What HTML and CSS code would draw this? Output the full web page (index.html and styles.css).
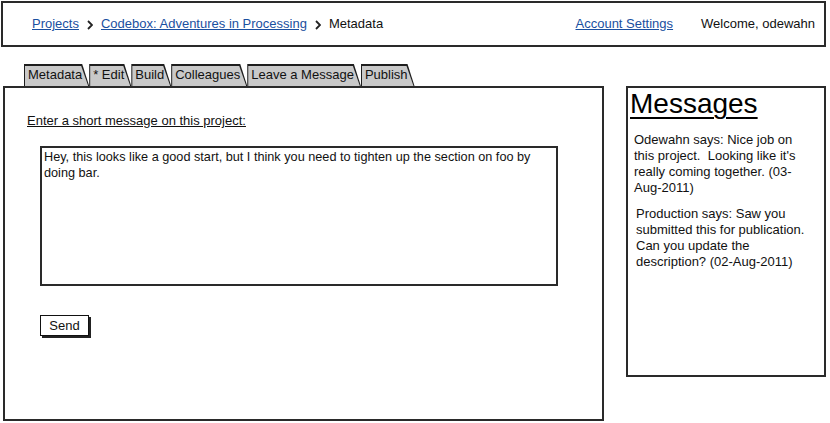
FILE: index.html
```html
<!DOCTYPE html>
<html>
<head>
<meta charset="utf-8">
<link rel="stylesheet" href="styles.css">
</head>
<body>
<div class="page">
  <header class="topbar">
    <nav class="crumbs">
      <a href="#" class="link">Projects</a>
      <svg class="chev" width="6" height="10" viewBox="0 0 6 10"><polyline points="1,1 5,5 1,9" fill="none" stroke="#222" stroke-width="1.8"/></svg>
      <a href="#" class="link">Codebox: Adventures in Processing</a>
      <svg class="chev" width="6" height="10" viewBox="0 0 6 10"><polyline points="1,1 5,5 1,9" fill="none" stroke="#222" stroke-width="1.8"/></svg>
      <span>Metadata</span>
    </nav>
    <div class="account">
      <a href="#" class="link">Account Settings</a>
      <span class="welcome">Welcome, odewahn</span>
    </div>
  </header>

  <div class="content">
    <nav class="tabs">
      <span class="tab"><span class="tab-in">Metadata</span></span>
      <span class="tab"><span class="tab-in">* Edit</span></span>
      <span class="tab"><span class="tab-in">Build</span></span>
      <span class="tab"><span class="tab-in">Colleagues</span></span>
      <span class="tab"><span class="tab-in">Leave a Message</span></span>
      <span class="tab"><span class="tab-in">Publish</span></span>
    </nav>

    <section class="panel">
      <div class="label">Enter a short message on this project:</div>
      <div class="textarea">Hey, this looks like a good start, but I think you need to tighten up the section on foo by doing bar.</div>
      <button class="send">Send</button>
    </section>

    <aside class="messages">
      <h2 class="msg-title">Messages</h2>
      <p class="msg msg-one">Odewahn says: Nice job on this project.&nbsp; Looking like it's really coming together. (03-Aug-2011)</p>
      <p class="msg msg-two">Production says: Saw you submitted this for publication. Can you update the description? (02-Aug-2011)</p>
    </aside>
  </div>
</div>
</body>
</html>
```

FILE: styles.css
```css
* { box-sizing: border-box; }
html, body { margin: 0; padding: 0; background: #fff; }
body {
  font-family: "Liberation Sans", Arial, sans-serif;
  font-size: 13px;
  color: #111;
  width: 830px;
  height: 423px;
  overflow: hidden;
}
.page { padding: 1px 0 0 1px; }

.topbar {
  width: 825px;
  height: 46px;
  border: 2px solid #2a2a2a;
  display: flex;
  align-items: center;
  justify-content: space-between;
  padding: 0 9px 0 29px;
  line-height: 16px;
}
.crumbs { display: flex; align-items: center; }
.chev { margin: 1px 8px 0 8px; }
.link { color: #1a4fa0; text-decoration: underline; }
.account { display: flex; align-items: center; gap: 28px; }
.welcome { color: #111; }

.content {
  display: grid;
  grid-template-columns: 601px 200px;
  grid-template-rows: 23px auto;
  column-gap: 22px;
  margin: 16px 0 0 2px;
  align-items: start;
}

.tabs {
  grid-column: 1;
  grid-row: 1;
  display: flex;
  padding-left: 21px;
  height: 23px;
  align-items: flex-end;
}
.tab {
  display: block;
  height: 22px;
  background: #1e1e1e;
  clip-path: polygon(0 0, calc(100% - 7px) 0, 100% 100%, 0 100%);
  padding: 2px 1px 0 1px;
}
.tab-in {
  display: block;
  height: 20px;
  background: #c9c9c9;
  clip-path: polygon(0 0, calc(100% - 7px) 0, 100% 100%, 0 100%);
  padding: 1px 6px 0 3px;
  line-height: 16px;
  color: #111;
}

.panel {
  grid-column: 1;
  grid-row: 2;
  height: 335px;
  border: 2px solid #2a2a2a;
  padding: 25px 0 0 22px;
  display: flex;
  flex-direction: column;
  align-items: flex-start;
}
.label { line-height: 16px; text-decoration: underline; }
.textarea {
  margin: 17px 0 0 13px;
  width: 518px;
  height: 140px;
  border: 2px solid #2a2a2a;
  padding: 1px 4px 0 2px;
  font-size: 12.7px;
  line-height: 16px;
}
.send {
  margin: 29px 0 0 13px;
  width: 49px;
  height: 21px;
  border: 1px solid #111;
  background: #fff;
  box-shadow: 2px 2px 0 #222;
  font-family: "Liberation Sans", Arial, sans-serif;
  font-size: 13px;
  color: #111;
  padding: 0;
  line-height: 18px;
}

.messages {
  grid-column: 2;
  grid-row: 2;
  height: 291px;
  border: 2px solid #2a2a2a;
  padding: 0 0 0 2px;
}
.msg-title {
  margin: 0;
  font-size: 28px;
  font-weight: normal;
  line-height: 30px;
  text-decoration: underline;
  text-decoration-thickness: 2px;
  text-underline-offset: 4px;
  padding-top: 1px;
  color: #000;
}
.msg {
  margin: 0;
  width: 172px;
  line-height: 16px;
}
.msg-one { margin: 13px 0 0 4px; }
.msg-two { margin: 10px 0 0 6px; }
```
